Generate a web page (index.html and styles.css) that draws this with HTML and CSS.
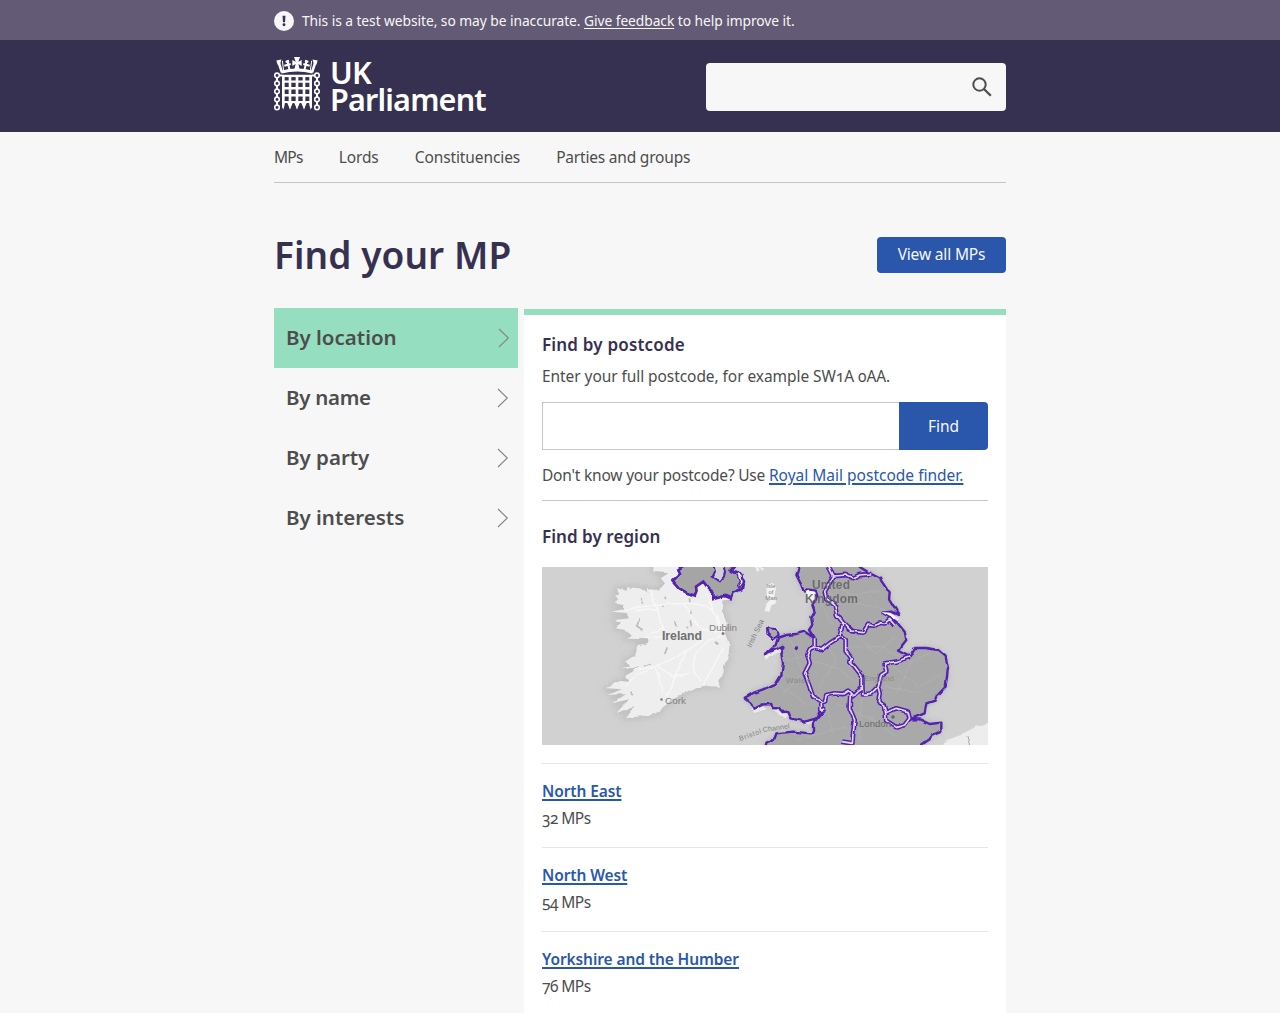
FILE: index.html
```html
<!DOCTYPE html>
<html lang="en">
<head>
<meta charset="utf-8">
<title>Find your MP - UK Parliament</title>
<link rel="stylesheet" href="styles.css">
</head>
<body>
<div class="banner">
  <div class="wrap banner-row">
    <svg class="alert" viewBox="0 0 20 20"><circle cx="10" cy="10" r="10" fill="#f7f7f7"/><path d="M8.5 4.8h3l-.5 6.4h-2z" fill="#37304f"/><circle cx="10" cy="13.7" r="1.45" fill="#37304f"/></svg>
    <span>This is a test website, so may be inaccurate. <a href="#">Give feedback</a> to help improve it.</span>
  </div>
</div>
<header class="header">
  <div class="wrap header-row">
    <a class="logo" href="#">
      <svg class="portcullis" viewBox="12 14 138 160" fill="#fff">
        <g fill="none" stroke="#fff" stroke-width="4.8">
          <circle cx="21" cy="69" r="6.8"/><circle cx="21" cy="93" r="6.8"/><circle cx="21" cy="117" r="6.8"/><circle cx="21" cy="141" r="6.8"/><circle cx="21" cy="165" r="6.8"/>
          <circle cx="141" cy="69" r="6.8"/><circle cx="141" cy="93" r="6.8"/><circle cx="141" cy="117" r="6.8"/><circle cx="141" cy="141" r="6.8"/><circle cx="141" cy="165" r="6.8"/>
          <path d="M21 76v10M21 100v10M21 124v10M21 148v10M141 76v10M141 100v10M141 124v10M141 148v10M28 69h8M126 69h8" stroke-width="6"/>
        </g>
        <path d="M36 67h90v7H36z"/>
        <path d="M36 70h8v88l-4 14-4-14zM56 70h8v88l-4 14-4-14zM77 70h8v88l-4 14-4-14zM98 70h8v88l-4 14-4-14zM118 70h8v88l-4 14-4-14z"/>
        <path d="M51 150h18l-9 20zM72 150h18l-9 20zM93 150h18l-9 20zM36 150h9l-9 20zM126 150h-9l9 20z"/>
        <path d="M36 84h90v7H36zM36 104h90v7H36zM36 125h90v7H36zM36 146h90v6H36z"/>
        <g fill="none" stroke="#fff">
          <path d="M34 59Q81 46 128 59" stroke-width="9"/>
          <path d="M26 30L36 60M136 30L126 60" stroke-width="8"/>
          <path d="M52 24l7 30M110 24l-7 30M43 40l19-5M119 40l-19-5" stroke-width="6"/>
          <path d="M37 25l4 30M125 25l-4 30" stroke-width="3"/>
        </g>
        <path d="M72 14h18l-5 14 10-5v18l-10-6 4 16H73l4-16-10 6V23l10 5zM19 24l15-3-3 12-8 4zM143 24l-15-3 3 12 8 4zM46 26l10-4 2 7-10 3zM116 26l-10-4-2 7 10 3z"/>
      </svg>
      <span class="logo-text"><span>UK</span><span>Parliament</span></span>
    </a>
    <form class="search">
      <input type="text" aria-label="Search">
      <svg viewBox="0 0 20 20"><circle cx="7.5" cy="7.5" r="6.2" fill="none" stroke="#4d4d4d" stroke-width="2"/><path d="M12 12l6.8 6.8" stroke="#4d4d4d" stroke-width="2.3"/></svg>
    </form>
  </div>
</header>
<div class="wrap">
  <nav class="nav"><a class="mps" href="#">MPs</a><a href="#">Lords</a><a href="#">Constituencies</a><a class="parties" href="#">Parties and groups</a></nav>
  <div class="title-row">
    <h1>Find your MP</h1>
    <a class="button" href="#">View all MPs</a>
  </div>
  <main class="columns">
    <ul class="tabs">
      <li class="active"><a href="#">By location</a><svg viewBox="0 0 12 20"><path d="M1 1l9.3 9L1 19"/></svg></li>
      <li><a class="name" href="#">By name</a><svg viewBox="0 0 12 20"><path d="M1 1l9.3 9L1 19"/></svg></li>
      <li><a href="#">By party</a><svg viewBox="0 0 12 20"><path d="M1 1l9.3 9L1 19"/></svg></li>
      <li><a href="#">By interests</a><svg viewBox="0 0 12 20"><path d="M1 1l9.3 9L1 19"/></svg></li>
    </ul>
    <section class="panel">
      <h2>Find by postcode</h2>
      <p class="hint">Enter your full postcode, for example SW1A 0AA.</p>
      <form class="postcode"><input type="text" aria-label="Postcode"><button type="button">Find</button></form>
      <p class="help">Don't know your postcode? Use <a href="#">Royal Mail postcode finder.</a></p>
      <h2 class="region-title">Find by region</h2>
      <svg class="map" viewBox="0 0 446 178">
        <defs>
          <filter id="rough" x="-5%" y="-5%" width="110%" height="110%"><feTurbulence type="fractalNoise" baseFrequency=".13" numOctaves="1" seed="4"/><feDisplacementMap in="SourceGraphic" scale="4" xChannelSelector="R" yChannelSelector="G"/><feGaussianBlur stdDeviation=".35"/></filter>
          <filter id="shade" x="-10%" y="-10%" width="120%" height="120%"><feGaussianBlur stdDeviation="9"/></filter>
          <path id="eire" d="M340 0L340 35 385 40 362 55 375 70 358 90 320 88 322 100 300 85 262 82 260 92 230 85 238 100 222 108 235 118 220 130 250 135 248 148 215 155 262 160 270 175 222 180 240 190 228 205 262 212 275 228 262 236 325 238 320 250 296 255 285 285 255 305 275 315 245 328 300 322 255 348 270 365 240 363 200 385 245 388 205 405 255 402 215 430 268 418 228 460 283 438 255 475 310 468 345 462 378 435 410 410 440 395 490 378 540 380 535 362 550 340 553 315 565 300 568 255 555 220 560 190 545 150 548 122 575 118 540 60 480 0Z"/>
          <path id="ulster" d="M440 10L415 28 420 42 398 62 418 85 440 98 465 107 470 95 468 80 490 65 505 85 520 98 520 117 555 108 572 115 578 98 605 88 612 65 600 40 583 38 572 32 590 10Z"/>
          <path id="coast" d="M108 0L108 21 100 45 115 75 123 98 135 88 158 92 163 108 148 135 155 155 145 175 148 195 138 210 155 235 140 225 125 215 100 222 70 225 45 233 38 255 20 272 3 283 62 258 55 285 60 310 55 345 40 370 0 388 -25 397 -55 413 -35 430 -28 447 0 433 25 432 28 444 50 445 58 456 75 455 85 475 125 485 160 475 172 450 187 447 150 490 150 510 145 520 90 515 40 520 35 535 10 548 0 600 480 600 475 555 500 538 505 525 535 512 535 488 500 492 470 478 440 478 485 460 490 430 515 422 520 410 548 380 555 325 548 290 525 270 490 264 455 264 440 290 405 272 430 240 425 215 400 185 380 172 358 158 385 155 408 165 378 115 380 100 350 55 325 42 290 21 290 0Z"/>
          <path id="borders" d="M198 0L198 21 212 48 185 95 190 115 215 135 222 165 240 188 230 230 200 250 175 270 155 262 155 235M212 48L250 45 270 54 290 45 325 42M240 188L265 213 300 218 315 195 335 197 350 188 365 190 380 178 395 195M235 230L248 240 248 270 265 295 262 307 275 320 298 350 298 385 285 393 270 408 255 392 240 402 215 400 190 405 185 425 175 425 150 410 138 375 125 340 140 310 133 285 140 268 155 262M298 385L300 403 325 400 345 380 355 345 370 335 365 310 400 305 440 290M345 380L350 400 346 425 362 435 368 458 400 445 435 455 440 475 425 495 400 502 370 482 368 458M262 400L260 445 275 480 270 525 268 550 235 545M175 425L175 450 187 447"/>
        </defs>
        <rect width="446" height="178" fill="#d1d1d1"/>
        <g filter="url(#rough)">
          <g transform="translate(-2 -7) scale(.33333)">
            <use href="#eire" stroke="#aaa" stroke-width="14" fill="#aaa" opacity=".45" filter="url(#shade)"/>
            <use href="#eire" fill="#eee"/>
            <path d="M303 115l5 16M290 200l8-22M288 196l20 14M404 180l4 20M374 282l8-20M312 318l20-8M365 135l2 6M375 110l2 8M448 115l2 12M453 150l4 8M453 180l4 16M440 200l4 5M527 245l8 8M272 398l6 8" fill="none" stroke="#bbb" stroke-width="5"/>
            <g fill="none" stroke="#f8f8f8" stroke-width="4">
              <path d="M250 150Q350 130 445 130T545 220M315 235L365 230M485 240Q440 280 350 318T262 380M280 330L345 320 370 400M350 320Q430 340 380 410M545 225Q480 250 465 290T480 360M490 375L520 320 550 265M345 130L370 205 320 225M430 130L480 205 545 220M500 100L545 215M330 90L350 150 290 150M450 340L390 350M440 270L400 365"/>
            </g>
            <use href="#ulster" fill="#a5a5a5" stroke="#5220b0" stroke-width="8"/>
            <path d="M520 10L525 35 518 50 540 64 552 50 555 35 548 10Z" fill="#d1d1d1" stroke="#5220b0" stroke-width="6"/>
            <path d="M590 35l16 8 4 24-13 18-4-8 8-12-6-18z" fill="#eee" stroke="#5220b0" stroke-width="4"/>
            <path d="M645 10l7 24M650 10l17 20" stroke="#eee" stroke-width="8"/>
          </g>
          <g transform="translate(221 -7) scale(.33333)">
            <path d="M115 80l48 10v25l-25 10-3-20-20-10zM355 150l55 25-8 16-25-18zM398 270l40 15-20 10-16-12zM5 278l50-20v22l-30 5-18 14zM-38 445l30-10 20 12-38 12zM30 450l40-8 12 20-15 12zM100 482l60-12 25-20-5 25-35 20zM45 520l100-8v14l-90 6zM15 30l8 12M12 125l20-10 10 12-18 10-5 22-14-5zM10 78l18-10 12 12-8 42-20-5z" fill="#f2f2f2"/>
            <use href="#coast" fill="#777" opacity=".5" filter="url(#shade)"/>
            <use href="#coast" fill="#a9a9a9" stroke="#5220b0" stroke-width="7" stroke-linejoin="round"/>
            <path d="M12 205l25 2 10 18-16 12-18-16z" fill="#aaa" stroke="#5220b0" stroke-width="6"/>
            <path d="M125 96l14-4 18 4 2 12-10 14-6-14-10 4zM355 156l30 2 18 14-12 6-15-10z" fill="#f5f5f5"/>
            <path d="M220 80L270 105 350 90M230 70L280 130 370 150M170 120L210 200M270 220L340 280 400 230M260 260L350 260 410 290M150 300L230 330 280 370M170 380L220 300 200 260M390 320L470 380 540 340M400 400L450 300 500 280M360 380L480 400M80 240L120 340 60 400M50 380L150 440M190 420L210 520M220 430L330 480 400 530M300 400L290 540M100 540L250 500M70 300L120 290" stroke="#b1b1b1" stroke-width="3" fill="none"/>
            <use href="#borders" fill="none" stroke="#5220b0" stroke-width="14.5" stroke-linejoin="round"/>
            <use href="#borders" fill="none" stroke="#e4d8f6" stroke-width="5" stroke-linejoin="round"/>
            <circle cx="62" cy="260" r="6" fill="#5220b0"/><circle cx="101" cy="265" r="6" fill="#5220b0"/>
            <path d="M530 570L545 548 600 520 640 500 690 488V570Z" fill="#ededed"/>
            <path d="M612 528l12 42" stroke="#aaa" stroke-width="3"/>
          </g>
        </g>
        <g class="labels" fill="#808080">
          <text x="120" y="73" font-size="12.3" font-weight="700" textLength="40" fill="#707070">Ireland</text>
          <text x="167" y="63.5" font-size="9.8" textLength="28" lengthAdjust="spacingAndGlyphs">Dublin</text>
          <text x="123" y="136.5" font-size="9.8" textLength="21" lengthAdjust="spacingAndGlyphs">Cork</text>
          <circle cx="119.5" cy="132.5" r="1.3"/><circle cx="181" cy="66.5" r="1.5"/>
          <g fill="#626262" opacity=".85" font-size="12" font-weight="700"><text x="270" y="21.5" textLength="38">United</text><text x="263" y="36" textLength="53">Kingdom</text></g>
          <g font-size="6" text-anchor="middle"><text x="229" y="20.5">Isle</text><text x="229" y="26.8">of</text><text x="229" y="33">Man</text></g>
          <text transform="translate(209 81) rotate(-64)" font-size="7.5" textLength="30">Irish Sea</text>
          <text transform="translate(198 174) rotate(-20)" font-size="7" textLength="23">Bristol</text>
          <text transform="translate(221 165) rotate(-8)" font-size="7" textLength="27">Channel</text>
          <text x="244" y="116" font-size="8" textLength="24" fill="#8a8a8a">Wales</text>
          <text x="322" y="114" font-size="8" textLength="30" fill="#8a8a8a">England</text>
          <text x="317" y="159.5" font-size="9.5" textLength="32" fill="#6a6a6a">London</text><circle cx="351" cy="150" r="1.7" fill="#666"/>
        </g>
      </svg>
      <ul class="regions">
        <li><a href="#">North East</a><span>32 MPs</span></li>
        <li><a href="#">North West</a><span>54 MPs</span></li>
        <li><a href="#">Yorkshire and the Humber</a><span>76 MPs</span></li>
      </ul>
    </section>
  </main>
</div>
</body>
</html>
```
FILE: styles.css
```css
* { box-sizing: border-box; }
html { overflow: hidden; }
body {
  margin: 0;
  height: 1013px;
  overflow: hidden;
  background: #f7f7f7;
  color: #4d4d4d;
  font: 15.5px/24px "Noto Sans", sans-serif;
  font-variant-numeric: oldstyle-nums;
}
h1, h2, p, ul { margin: 0; padding: 0; }
ul { list-style: none; }
a { color: inherit; text-decoration: none; }
input { font: inherit; border: 0; outline: 0; min-width: 0; }
.wrap { width: 732px; margin: 0 auto; }

.banner { height: 40px; background: #635a75; color: #f7f7f7; font-size: 13.8px; letter-spacing: -.06px; }
.banner-row { display: flex; align-items: center; gap: 8px; height: 41px; white-space: nowrap; }
.banner a { text-decoration: underline; text-decoration-thickness: 1px; text-underline-offset: 2px; text-decoration-skip-ink: none; }
.alert { width: 20px; height: 20px; }

.header { height: 92px; background: #373151; }
.header-row { display: flex; justify-content: space-between; align-items: flex-start; }
.logo { display: flex; gap: 10px; padding-top: 17px; color: #fff; }
.portcullis { width: 46px; height: 53.5px; }
.logo-text { display: flex; flex-direction: column; font-size: 30.5px; font-weight: 600; line-height: 26.5px; letter-spacing: -.8px; padding-top: 2px; }
.search { display: flex; align-items: center; width: 300px; height: 48px; margin-top: 23px; padding-right: 14px; background: #f7f7f7; border-radius: 4px; }
.search input { flex: 1; background: transparent; }
.search svg { width: 20px; height: 20px; }

.nav { display: flex; gap: 36px; height: 51px; padding-top: 13px; border-bottom: 1px solid #c6c6c9; letter-spacing: -.1px; }
.nav .mps { letter-spacing: -.75px; }
.nav .parties { letter-spacing: -.2px; }

.title-row { display: flex; justify-content: space-between; align-items: center; height: 36px; margin-top: 54px; }
h1 { color: #373151; font-size: 37px; line-height: 50px; font-weight: 600; letter-spacing: .08px; }
.button { width: 129px; height: 36px; border-radius: 4px; background: #2a57ab; color: #f7f7f7; text-align: center; line-height: 35px; letter-spacing: -.15px; }

.columns { display: flex; gap: 6px; align-items: flex-start; margin-top: 35px; }
.tabs { width: 244px; font-size: 20.5px; font-weight: 600; }
.tabs li { display: flex; justify-content: space-between; align-items: center; height: 60px; padding: 0 9px 0 12px; }
.tabs a { padding-bottom: 2px; }
.tabs .name { letter-spacing: -.3px; }
.tabs .active { background: #96dec0; padding-right: 8px; }
.tabs svg { width: 12px; height: 20px; fill: none; stroke: #858585; stroke-width: 1.1; }

.panel { width: 482px; margin-top: 1px; padding: 18px 18px 40px; border-top: 6px solid #96dec0; background: #fff; }
h2 { color: #373151; font-size: 17px; line-height: 24px; font-weight: 600; letter-spacing: .19px; }
.hint { margin-top: 7px; letter-spacing: -.07px; }
.postcode { display: flex; height: 48px; margin-top: 14px; }
.postcode input { flex: 1; border: 1px solid #c6c6c9; border-right: 0; }
.postcode button { width: 89px; border: 0; padding: 0; border-radius: 0 4px 4px 0; background: #2a57ab; color: #f7f7f7; font: inherit; }
.help { height: 51px; padding-top: 13px; border-bottom: 1px solid #c6c6c9; white-space: nowrap; letter-spacing: -.2px; }
.help a { color: #2a57ab; text-decoration: underline; text-decoration-thickness: 2px; text-underline-offset: 2px; letter-spacing: 0; }
.region-title { margin-top: 24px; letter-spacing: .05px; }
.map { display: block; width: 446px; height: 178px; margin: 18px 0; }
.labels { font-family: "Liberation Sans", Arial, sans-serif; }
.regions li { display: flex; flex-direction: column; align-items: flex-start; height: 84px; padding-top: 15px; border-top: 1px solid #e6e6e8; }
.regions a { color: #2a57ab; font-weight: 600; letter-spacing: -.1px; text-decoration: underline; text-decoration-thickness: 2px; text-underline-offset: 2px; text-decoration-skip-ink: none; }
.regions span { margin-top: 3px; letter-spacing: -.55px; }
```
